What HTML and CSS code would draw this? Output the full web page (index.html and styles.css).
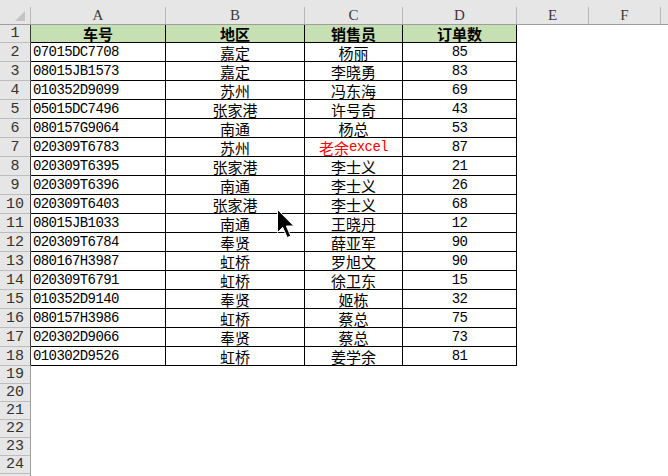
FILE: index.html
```html
<!DOCTYPE html>
<html lang="zh">
<head>
<meta charset="utf-8">
<title>Sheet</title>
<link rel="stylesheet" href="styles.css">
</head>
<body>
<div class="sheet">
  <div class="colhead">
    <div class="ch corner"><svg class="tri" width="11" height="11" viewBox="0 0 11 11"><polygon points="10,0 10,10 0,10" fill="#c4c4c4"/></svg></div>
    <div class="ch w-a">A</div>
    <div class="ch w-b">B</div>
    <div class="ch w-c">C</div>
    <div class="ch w-d">D</div>
    <div class="ch w-e">E</div>
    <div class="ch w-f">F</div>
    <div class="ch w-g"></div>
  </div>

  <div class="row first"><div class="rh">1</div><div class="c w-a hd">车号</div><div class="c w-b hd">地区</div><div class="c w-c hd">销售员</div><div class="c w-d hd">订单数</div></div>
  <div class="row data"><div class="rh">2</div><div class="c w-a code">07015DC7708</div><div class="c w-b cjk">嘉定</div><div class="c w-c cjk">杨丽</div><div class="c w-d num">85</div></div>
  <div class="row data"><div class="rh">3</div><div class="c w-a code">08015JB1573</div><div class="c w-b cjk">嘉定</div><div class="c w-c cjk">李晓勇</div><div class="c w-d num">83</div></div>
  <div class="row data"><div class="rh">4</div><div class="c w-a code">010352D9099</div><div class="c w-b cjk">苏州</div><div class="c w-c cjk">冯东海</div><div class="c w-d num">69</div></div>
  <div class="row data"><div class="rh">5</div><div class="c w-a code">05015DC7496</div><div class="c w-b cjk">张家港</div><div class="c w-c cjk">许号奇</div><div class="c w-d num">43</div></div>
  <div class="row data"><div class="rh">6</div><div class="c w-a code">080157G9064</div><div class="c w-b cjk">南通</div><div class="c w-c cjk">杨总</div><div class="c w-d num">53</div></div>
  <div class="row data"><div class="rh">7</div><div class="c w-a code">020309T6783</div><div class="c w-b cjk">苏州</div><div class="c w-c cjk red">老余<span class="lat">excel</span></div><div class="c w-d num">87</div></div>
  <div class="row data"><div class="rh">8</div><div class="c w-a code">020309T6395</div><div class="c w-b cjk">张家港</div><div class="c w-c cjk">李士义</div><div class="c w-d num">21</div></div>
  <div class="row data"><div class="rh">9</div><div class="c w-a code">020309T6396</div><div class="c w-b cjk">南通</div><div class="c w-c cjk">李士义</div><div class="c w-d num">26</div></div>
  <div class="row data"><div class="rh">10</div><div class="c w-a code">020309T6403</div><div class="c w-b cjk">张家港</div><div class="c w-c cjk">李士义</div><div class="c w-d num">68</div></div>
  <div class="row data"><div class="rh">11</div><div class="c w-a code">08015JB1033</div><div class="c w-b cjk">南通</div><div class="c w-c cjk">王晓丹</div><div class="c w-d num">12</div></div>
  <div class="row data"><div class="rh">12</div><div class="c w-a code">020309T6784</div><div class="c w-b cjk">奉贤</div><div class="c w-c cjk">薛亚军</div><div class="c w-d num">90</div></div>
  <div class="row data"><div class="rh">13</div><div class="c w-a code">080167H3987</div><div class="c w-b cjk">虹桥</div><div class="c w-c cjk">罗旭文</div><div class="c w-d num">90</div></div>
  <div class="row data"><div class="rh">14</div><div class="c w-a code">020309T6791</div><div class="c w-b cjk">虹桥</div><div class="c w-c cjk">徐卫东</div><div class="c w-d num">15</div></div>
  <div class="row data"><div class="rh">15</div><div class="c w-a code">010352D9140</div><div class="c w-b cjk">奉贤</div><div class="c w-c cjk">姬栋</div><div class="c w-d num">32</div></div>
  <div class="row data"><div class="rh">16</div><div class="c w-a code">080157H3986</div><div class="c w-b cjk">虹桥</div><div class="c w-c cjk">蔡总</div><div class="c w-d num">75</div></div>
  <div class="row data"><div class="rh">17</div><div class="c w-a code">020302D9066</div><div class="c w-b cjk">奉贤</div><div class="c w-c cjk">蔡总</div><div class="c w-d num">73</div></div>
  <div class="row data"><div class="rh">18</div><div class="c w-a code">010302D9526</div><div class="c w-b cjk">虹桥</div><div class="c w-c cjk">姜学余</div><div class="c w-d num">81</div></div>
  <div class="row empty"><div class="rh">19</div></div>
  <div class="row empty"><div class="rh">20</div></div>
  <div class="row empty"><div class="rh">21</div></div>
  <div class="row empty"><div class="rh">22</div></div>
  <div class="row empty"><div class="rh">23</div></div>
  <div class="row empty"><div class="rh">24</div></div>
  <div class="row empty"><div class="rh"></div></div>

  <svg class="cursor" width="20" height="30" viewBox="0 0 20 30"><path d="M0.5 0.5 L0.5 23.5 L5.7 18.3 L10.2 28.5 L13.8 27 L9.3 17 L16.8 17 Z" fill="#000" stroke="#fff" stroke-width="1"/></svg>
</div>
</body>
</html>
```

FILE: styles.css
```css
* { box-sizing: border-box; }
html, body { margin: 0; padding: 0; background: #fff; }
body { width: 668px; height: 476px; overflow: hidden; }

.sheet {
  position: relative;
  width: 668px;
  height: 476px;
  overflow: hidden;
  background: #fff;
}

.colhead {
  display: flex;
  height: 25px;
  background: #e6e6e6;
  border-bottom: 1px solid #9e9e9e;
}
.ch {
  margin-top: 7px;
  height: 17px;
  border-right: 1px solid #b9b9b9;
  display: flex;
  align-items: center;
  justify-content: center;
  font-family: "Liberation Serif", serif;
  font-size: 15px;
  line-height: 17px;
  color: #3a3a3a;
  flex: none;
}
.corner { width: 31px; position: relative; }
.tri { position: absolute; right: 4px; bottom: 2px; }
.w-a { width: 135px; }
.w-b { width: 139px; }
.w-c { width: 98px; }
.w-d { width: 114px; }
.w-e { width: 72px; }
.w-f { width: 72px; }
.w-g { flex: 1; border-right: none; }

.row { display: flex; height: 19px; }
.row.first { height: 18px; }
.row.empty { height: 18px; }

.rh {
  width: 31px;
  flex: none;
  background: #e6e6e6;
  border-right: 1px solid #9e9e9e;
  border-bottom: 1px solid #bdbdbd;
  display: flex;
  align-items: center;
  justify-content: center;
  font-family: "Liberation Mono", monospace;
  font-size: 15px;
  line-height: 17px;
  color: #333;
}
.row.first .rh, .row.data .rh { border-right-color: #3a3a3a; }

.c {
  flex: none;
  border-right: 1px solid #000;
  border-bottom: 1px solid #000;
  display: flex;
  align-items: center;
  justify-content: center;
  white-space: nowrap;
  color: #000;
  line-height: 17px;
}
.hd {
  background: #c6e0b4;
  font-family: "Noto Sans CJK SC", sans-serif;
  font-weight: 700;
  font-size: 15px;
}
.code {
  justify-content: flex-start;
  padding-left: 2px;
  font-family: "Liberation Mono", monospace;
  font-size: 14px;
  letter-spacing: -0.6px;
}
.cjk {
  font-family: "Noto Sans CJK SC", sans-serif;
  font-size: 15px;
}
.num {
  font-family: "Liberation Mono", monospace;
  font-size: 14px;
  letter-spacing: -0.6px;
}
.red { color: #ff0000; }
.lat {
  font-family: "Liberation Mono", monospace;
  font-size: 14px;
  letter-spacing: -0.6px;
}

.cursor {
  position: absolute;
  left: 277px;
  top: 209px;
}
```
